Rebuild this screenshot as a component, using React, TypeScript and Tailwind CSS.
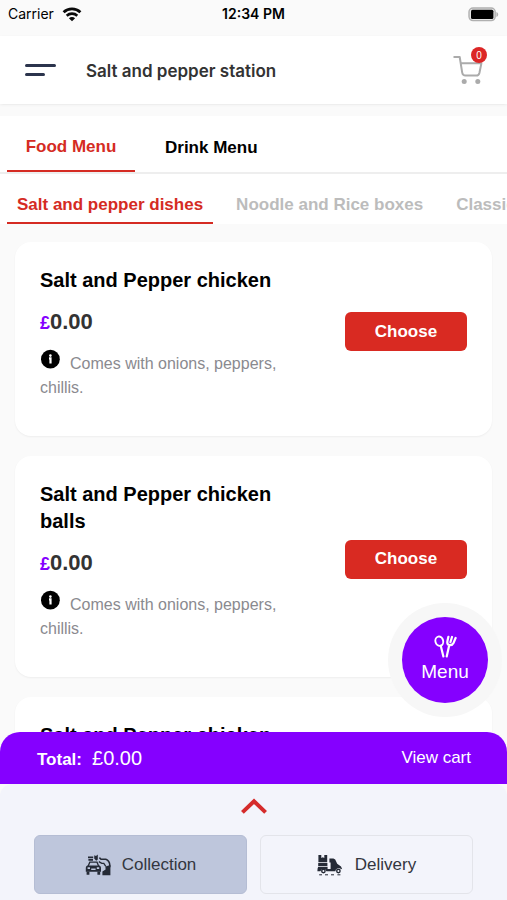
import { useState } from "react";

const dishes = [
  { id: 1, name: "Salt and Pepper chicken", price: "0.00", note: "Comes with onions, peppers, chillis." },
  { id: 2, name: "Salt and Pepper chicken balls", price: "0.00", note: "Comes with onions, peppers, chillis." },
  { id: 3, name: "Salt and Pepper chicken", price: "0.00", note: "Comes with onions, peppers, chillis." },
];

const categories = ["Salt and pepper dishes", "Noodle and Rice boxes", "Classics"];

function WifiIcon() {
  return (
    <svg className="h-[15px] w-5" viewBox="0 0 20 15" fill="none" stroke="#0a0a0a" aria-hidden="true">
      <path d="M1.6 5.2C6.3.7 13.7.7 18.4 5.2" strokeWidth="2.8" />
      <path d="M4.7 8.7C7.7 5.9 12.3 5.9 15.3 8.7" strokeWidth="2.6" />
      <path d="M10 14.3 6.9 11.2C8.7 9.7 11.3 9.7 13.1 11.2Z" fill="#0a0a0a" stroke="none" />
    </svg>
  );
}

function BatteryIcon() {
  return (
    <svg className="h-[15px] w-[31px]" viewBox="0 0 31 15" aria-hidden="true">
      <rect x="1" y="1" width="26.2" height="12.6" rx="4" fill="#e5e5e5" stroke="#b0b0b0" strokeWidth="1.4" />
      <rect x="3" y="2.8" width="22.4" height="9.2" rx="1.5" fill="#000" />
      <path d="M28.4 5v5c2.4-.8 2.4-4.2 0-5Z" fill="#b0b0b0" />
    </svg>
  );
}

function CartIcon() {
  return (
    <svg className="h-[30px] w-[30px]" viewBox="0 0 30 30" fill="none" stroke="#ababab" strokeWidth="2" strokeLinejoin="round" aria-hidden="true">
      <path d="M.5 2H6.7L9.2 17.6Q9.8 20.6 12.4 20.6H23.3Q25.7 20.6 26.4 18L28.4 8.2H7.8" />
      <circle cx="11.2" cy="26.6" r="2.5" fill="#ababab" stroke="none" />
      <circle cx="24.8" cy="26.6" r="2.5" fill="#ababab" stroke="none" />
    </svg>
  );
}

function InfoIcon() {
  return (
    <svg className="mr-[10px] inline-block h-5 w-5 align-baseline" viewBox="0 0 20 20" aria-hidden="true">
      <circle cx="10.4" cy="10.2" r="9.4" fill="#000" />
      <circle cx="10.4" cy="6.6" r="1.3" fill="#fff" />
      <path d="M9 9.4H10.5V14.6" stroke="#fff" strokeWidth="2.2" fill="none" />
    </svg>
  );
}

function CutleryIcon() {
  return (
    <svg className="h-[23px] w-[23px]" viewBox="0 0 23 23" fill="none" stroke="#fff" strokeWidth="1.9" strokeLinecap="round" aria-hidden="true">
      <ellipse cx="5.3" cy="6.2" rx="3.9" ry="4.7" transform="rotate(-14 5.3 6.2)" />
      <path d="M6.8 11 9.4 21.4" strokeWidth="2.2" />
      <path d="M14.4 1.8 13.4 6.2Q12.8 9.4 15.4 10Q18.2 10.6 19.5 8L21.6 3M18 2 16.4 7.2M15.2 10.2 12.7 21.4" strokeWidth="2.2" />
    </svg>
  );
}

function CollectionIcon() {
  return (
    <svg className="h-[22px] w-[26px]" viewBox="0 0 26 22" fill="#252a36" aria-hidden="true">
      <path d="M3 2.6H8.2V4.2H3ZM3.4 5H8V6.7H3.4ZM9.3 1.2 11 2 12.8.5V5.4L11.2 6.8 9.2 4.5Z" />
      <path d="M3.2 12 4.8 8.2H12L13.6 12" fill="none" stroke="#252a36" strokeWidth="1.3" />
      <path fillRule="evenodd" d="M2.2 11.4H14.6Q16 12.2 16 13.8V17.8H.8V13.8Q.8 12.2 2.2 11.4ZM2.6 13.2V15H5V13.2ZM11.8 13.2V15H14.2V13.2ZM6.2 14.4V16H10.6V14.4Z" />
      <path d="M1.6 17.5H4.4V20.8H1.6ZM12.4 17.5H15.2V20.8H12.4Z" />
      <path d="M14.4 3.6 16 5.2H20.8Q24.6 6.8 24.8 11V13.2" fill="none" stroke="#252a36" strokeWidth="1.5" />
      <path d="M13.8 7.6 16.8 9.4H18.8L20.8 12.4" fill="none" stroke="#252a36" strokeWidth="1.3" />
      <path d="M20.4 12.4 25.4 11V21.2H17.4V17.6L20.6 15.4Z" />
    </svg>
  );
}

function DeliveryIcon() {
  return (
    <svg className="h-[22px] w-[26px]" viewBox="0 0 26 22" fill="#252a36" aria-hidden="true">
      <path d="M1.4 1H4.3V4L5.8 3.2 7.3 4V1H10.2V8.2H1.4Z" />
      <path d="M1.2 9H10.4V12H1.2ZM1.2 12.8H10.6V15H13.6V8.6H12.4V4.4H16.4L18.2 5.4 20.2 9.8 24 12.4 25.2 15.2 23.6 14.8A3.2 3.2 0 0 0 18.4 17.2H9.4A3.2 3.2 0 0 0 3.4 17.2H.4Q.4 14 1.2 12.8Z" />
      <circle cx="6.4" cy="17" r="1.7" fill="none" stroke="#252a36" strokeWidth="1.4" />
      <circle cx="21.4" cy="17" r="1.7" fill="none" stroke="#252a36" strokeWidth="1.4" />
      <path d="M2.2 20.8H5M8 20.8H11M14 20.8H17M20.4 20.8H23.4" stroke="#252a36" strokeWidth="1" />
    </svg>
  );
}

export default function App() {
  const [category, setCategory] = useState(categories[0]);

  return (
    <div className="flex h-screen flex-col overflow-hidden bg-[#fafafa] font-['Liberation_Sans',Arial,sans-serif] text-black">
      <div className="grid h-9 shrink-0 grid-cols-3 items-center px-2 pb-2 font-['Inter',sans-serif] text-sm">
        <span className="flex items-center gap-2">Carrier <WifiIcon /></span>
        <span className="text-center font-semibold">12:34 PM</span>
        <span className="flex justify-end"><BatteryIcon /></span>
      </div>

      <header className="flex h-[68px] shrink-0 items-center bg-white pr-6 pl-[25px] shadow-sm shadow-black/5">
        <button type="button" aria-label="Open navigation" className="flex w-[31px] flex-col gap-[6px]">
          <span className="h-[3px] w-full rounded-full bg-[#2b344d]" />
          <span className="h-[3px] w-5 rounded-full bg-[#2b344d]" />
        </button>
        <h1 className="ml-[30px] flex-1 pt-1 font-['Inter',sans-serif] text-[17px] font-semibold text-[#333]">Salt and pepper station</h1>
        <button type="button" aria-label="Cart" className="relative">
          <CartIcon />
          <span className="absolute -top-2 -right-1 flex h-4 w-4 items-center justify-center rounded-full bg-[#dc2626] text-[10px] text-white">0</span>
        </button>
      </header>

      <nav className="mt-3 shrink-0 bg-white">
        <div className="flex h-[58px] items-stretch border-b-2 border-[#eeeeee] px-[7px] text-[17px] font-bold">
          <button type="button" className="w-32 border-b-2 border-[#d52b23] pt-2 text-[#d52b23]">Food Menu</button>
          <button type="button" className="ml-[30px] pt-2">Drink Menu</button>
        </div>
        <div className="flex h-[50px] gap-[13px] overflow-hidden px-[7px] text-[17px] font-bold whitespace-nowrap">
          {categories.map((item) => (
            <button
              key={item}
              type="button"
              onClick={() => setCategory(item)}
              className={
                item === category
                  ? "shrink-0 border-b-2 border-[#d52b23] px-[10px] pt-[14px] text-[#d52b23]"
                  : "shrink-0 border-b-2 border-transparent px-[10px] pt-[14px] text-[#bcbcbc]"
              }
            >
              {item}
            </button>
          ))}
        </div>
      </nav>

      <main className="flex min-h-0 flex-1 flex-col gap-5 overflow-x-hidden overflow-y-auto px-[15px] pt-[18px] [scrollbar-width:none]">
        {dishes.map((dish) => (
          <article key={dish.id} className="flex shrink-0 items-center justify-between rounded-2xl bg-white px-[25px] pt-[25px] pb-9 shadow-xs shadow-black/5">
            <div className="w-[245px]">
              <h2 className="text-xl leading-[27px] font-bold">{dish.name}</h2>
              <p className="mt-[13px] text-[22px] leading-[30px] font-bold text-[#333]">
                <span className="text-lg text-[#8500ff]">£</span>{dish.price}
              </p>
              <p className="mt-3 text-base leading-6 text-[#8a8a8f]"><InfoIcon />{dish.note}</p>
            </div>
            <button type="button" className="mb-1 h-[39px] w-[122px] rounded-md bg-[#d92a22] text-[17px] font-bold text-white">Choose</button>
          </article>
        ))}
      </main>

      <footer className="relative -mt-5 shrink-0">
        <button type="button" className="absolute right-[5px] bottom-[183px] flex h-[114px] w-[114px] items-center justify-center rounded-full bg-[#f7f7f7]">
          <span className="flex h-[86px] w-[86px] flex-col items-center justify-center rounded-full bg-[#8500ff] text-[19px] leading-7 text-white">
            <CutleryIcon />
            Menu
          </span>
        </button>
        <div className="flex h-[52px] items-center justify-between rounded-t-[20px] bg-[#8500ff] pr-9 pl-[37px] text-white">
          <p className="flex items-baseline gap-[10px] text-xl"><strong className="text-[17px]">Total:</strong>£0.00</p>
          <a href="#cart" className="text-[17px]">View cart</a>
        </div>
        <div className="flex h-[116px] flex-col rounded-t-xl bg-[#f3f4fb] px-[34px] pb-[6px]">
          <button type="button" aria-label="Expand order options" className="flex flex-1 items-start justify-center pt-[14px]">
            <svg className="h-4 w-[26px]" viewBox="0 0 26 16" fill="none" stroke="#d52b2b" strokeWidth="4" aria-hidden="true">
              <path d="M1.4 14.4 13 3.2 24.6 14.4" />
            </svg>
          </button>
          <div className="grid h-[59px] grid-cols-2 gap-[13px] text-[17px] text-[#333640]">
            <button type="button" className="flex items-center justify-center gap-[11px] rounded-md border border-[#b5bdd4] bg-[#bec6dc]">
              <CollectionIcon />Collection
            </button>
            <button type="button" className="flex items-center justify-center gap-3 rounded-md border border-[#e3e4ea]">
              <DeliveryIcon />Delivery
            </button>
          </div>
        </div>
      </footer>
    </div>
  );
}
